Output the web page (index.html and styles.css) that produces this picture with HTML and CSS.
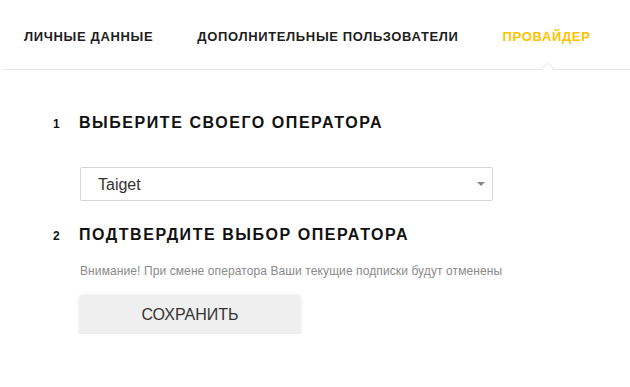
FILE: index.html
```html
<!DOCTYPE html>
<html lang="ru">
<head>
  <meta charset="UTF-8">
  <meta name="viewport" content="width=device-width, initial-scale=1.0">
  <title>Провайдер</title>
  <link rel="stylesheet" href="styles.css">
</head>
<body>
  <!-- Profile tabs -->
  <nav class="tabs">
    <a class="tab" href="#">Личные данные</a>
    <a class="tab" href="#">Дополнительные пользователи</a>
    <a class="tab active" href="#">Провайдер</a>
  </nav>

  <main class="provider">
    <section class="step">
      <h2 class="step-title"><span class="step-num">1</span>Выберите своего оператора</h2>
      <div class="step-body">
        <div class="select-wrap">
          <select class="operator-select">
            <option>Taiget</option>
          </select>
        </div>
      </div>
    </section>

    <section class="step">
      <h2 class="step-title"><span class="step-num">2</span>Подтвердите выбор оператора</h2>
      <div class="step-body">
        <p class="note">Внимание! При смене оператора Ваши текущие подписки будут отменены</p>
        <button class="save-btn">Сохранить</button>
      </div>
    </section>
  </main>
</body>
</html>
```

FILE: styles.css
```css
body {
  margin: 0;
  font-family: "Liberation Sans", Arial, sans-serif;
  color: #222;
  background: #fff;
}

/* tabs */
.tabs {
  display: flex;
  align-items: center;
  height: 70px;
  margin-left: 3px;
  padding: 4px 0 0 21px;
  box-sizing: border-box;
  border-bottom: 1px solid #e9e9e9;
}
.tab {
  position: relative;
  flex-shrink: 0;
  white-space: nowrap;
  font-size: 13px;
  font-weight: bold;
  letter-spacing: 0.65px;
  text-transform: uppercase;
  color: #1e1e1e;
  text-decoration: none;
  margin-right: 44px;
}
.tab:last-child {
  margin-right: 0;
}
.tab.active {
  color: #fdc300;
}
.tab.active::after {
  content: "";
  position: absolute;
  left: 50%;
  bottom: -29px;
  width: 8px;
  height: 8px;
  margin-left: -4px;
  background: #fff;
  border-left: 1px solid #e9e9e9;
  border-top: 1px solid #e9e9e9;
  transform: rotate(45deg);
}

/* steps */
.provider {
  padding: 43px 0 0 53px;
}
.step-title {
  display: flex;
  align-items: baseline;
  margin: 0;
  font-size: 16px;
  line-height: 20px;
  font-weight: bold;
  text-transform: uppercase;
  letter-spacing: 1.55px;
  color: #111;
}
.step-num {
  width: 26px;
  font-size: 12px;
  letter-spacing: 0;
}
.step-body {
  margin-left: 27px;
}
.step + .step {
  margin-top: 24px;
}

.select-wrap {
  position: relative;
  width: 413px;
  margin-top: 33px;
}
.select-wrap::after {
  content: "";
  position: absolute;
  right: 8px;
  top: 15px;
  border-left: 4px solid transparent;
  border-right: 4px solid transparent;
  border-top: 4px solid #888;
}
.operator-select {
  display: block;
  width: 100%;
  height: 34px;
  padding: 0 17px;
  font-family: inherit;
  font-size: 16px;
  color: #333;
  background: #fff;
  border: 1px solid #d6d6d6;
  border-radius: 2px;
  appearance: none;
  -webkit-appearance: none;
}

.note {
  margin: 17px 0 0;
  font-size: 12px;
  line-height: 16px;
  letter-spacing: 0.1px;
  color: #8a8a8a;
}

.save-btn {
  display: block;
  width: 220px;
  height: 39px;
  margin-top: 16px;
  font-family: inherit;
  font-size: 16px;
  text-transform: uppercase;
  color: #333;
  background: #efefef;
  border: none;
  border-radius: 2px;
  box-shadow: 0 1px 4px rgba(0, 0, 0, 0.15);
  cursor: pointer;
}
```
